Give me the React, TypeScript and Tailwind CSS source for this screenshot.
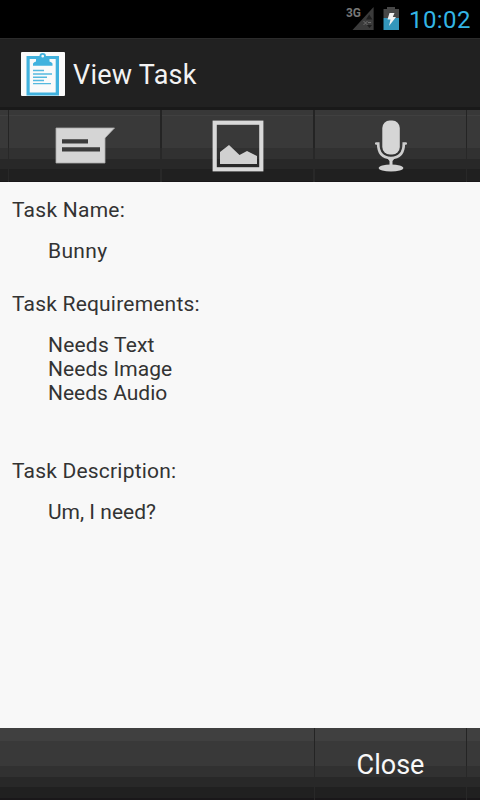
import React from "react";

function StatusBar() {
  return (
    <div className="flex h-[38px] items-start bg-black pl-[346px]">
      <svg width="60" height="38" viewBox="0 0 60 38" className="shrink-0">
        <path d="M27.600 7V30H6.500Z" fill="#3b3b3b" />
        <path d="M20 19.500l3.200-5 3.200 5zM21 25h5l-2.500 3z" fill="#1e1e1e" />
        <path d="M17.500 21l4 4M21.500 21l-4 4M22 22.500h3" stroke="#707070" strokeWidth="0.900" fill="none" />
        <text x="0" y="17" fontFamily="Roboto, sans-serif" fontWeight="700" fontSize="13.500" textLength="15" lengthAdjust="spacingAndGlyphs" fill="#777">3G</text>
        <path d="M41 7h8v2h4v9H37.500V9H41z" fill="#474747" />
        <path d="M37.500 18H53v12H37.500z" fill="#3396bb" />
        <path d="M43.500 13h5l-1.700 4h3.200l-7 9 1.500-6.500h-3z" fill="#f2f2f2" />
      </svg>
      <span className="ml-[3px] mt-[6px] whitespace-nowrap text-[24px] leading-[28px] tracking-[0.4px] text-[#33b5e5]">10:02</span>
    </div>
  );
}

function ClipboardIcon() {
  return (
    <svg width="44" height="44" viewBox="0 0 44 44" className="shrink-0">
      <rect width="44" height="44" rx="1" fill="#fafafa" />
      <path d="M5.500 4H38v39.500H5.500zM8.700 7V40.500h26V7z" fill="#41b2de" fillRule="evenodd" />
      <path d="M12 13.800v-2.300q1-1.500 3-2V7h13.500v2.500q2 .5 3 2v2.300z" fill="#41b2de" />
      <circle cx="21.700" cy="4.200" r="2.300" fill="#fafafa" stroke="#41b2de" strokeWidth="1.900" />
      <path d="M12 18.500h11M12 22h19M12 25.300h14M12 28.500h11M12 31.600h18" stroke="#55b9df" strokeWidth="1.400" />
    </svg>
  );
}

function TextIcon() {
  return (
    <svg width="60" height="38" viewBox="0 0 60 38" className="mt-[-1px] ml-[1px]">
      <path d="M1 1H59.500L50 11V36H1z" fill="#d5d5d5" stroke="#ababab" strokeWidth="0.8" />
      <path d="M7 12.200h26v4.300H7zM7 20.200h38v4.300H7z" fill="#3a3a3a" />
    </svg>
  );
}

function ImageIcon() {
  return (
    <svg width="52" height="52" viewBox="0 0 52 52">
      <rect x="2.700" y="2.700" width="46.600" height="46.600" fill="none" stroke="#d9d9d9" strokeWidth="4.200" />
      <path d="M8 32l9-7 10.500 10 7.500-4 10 5v8H8z" fill="#d0d0d0" />
    </svg>
  );
}

function MicIcon() {
  return (
    <svg width="34" height="52" viewBox="0 0 34 52">
      <rect x="8.300" y="0.500" width="17.500" height="34" rx="7.500" fill="#d6d6d6" />
      <path d="M2.300 23.500H4.200q0 14.500 12.800 14.500t12.800-14.500h1.900" fill="none" stroke="#cdcdcd" strokeWidth="2.700" strokeLinecap="round" />
      <path d="M13 38h8l-2.500 3v5h-3v-5z" fill="#d0d0d0" />
      <ellipse cx="17" cy="48" rx="12.300" ry="3.600" fill="#d0d0d0" />
    </svg>
  );
}

const topBar =
  "bg-[linear-gradient(#383838_0_5px,#404040_5px_6px,#393939_6px_38px,#313131_38px_49px,#282828_49px_59px,#202020_59px_71px,#191719_71px_72px)]";
const bottomBar =
  "bg-[linear-gradient(#404040_0_13px,#393939_13px_38px,#313131_38px_49px,#282828_49px_59px,#202020_59px_70px,#191719_70px_72px)]";
const seam = "shrink-0 bg-[linear-gradient(#242424_0_38px,#282828_38px_72px)]";

export default function App() {
  return (
    <div className="flex h-[800px] w-[480px] flex-col overflow-hidden bg-[#f8f8f8] font-['Roboto',sans-serif]">
      <StatusBar />
      <header className="flex h-[72px] items-start border-t border-b-[3px] border-t-[#2b2b2b] border-b-[#191919] bg-[#212121] pl-[21px] pt-[13px]">
        <ClipboardIcon />
        <h1 className="ml-[8px] mt-[7px] text-[27px] leading-[32px] tracking-[0.25px] text-[#f3f3f3]">View Task</h1>
      </header>
      <nav className={`flex h-[72px] shrink-0 ${topBar}`}>
        <div className={`ml-2 w-px ${seam}`} />
        <button className="flex w-[151px] items-center justify-center"><TextIcon /></button>
        <div className={`w-[2px] ${seam}`} />
        <button className="flex w-[151px] items-center justify-center"><ImageIcon /></button>
        <div className={`w-[2px] ${seam}`} />
        <button className="flex w-[151px] items-center justify-center"><MicIcon /></button>
        <div className={`w-px ${seam}`} />
      </nav>
      <main className="flex-1 px-3 pt-4 text-[21px] leading-[24px] tracking-[0.2px] text-[#333]">
        <h2 className="tracking-[0.25px]">Task Name:</h2>
        <p className="mt-[17px] pl-9 tracking-[0.35px]">Bunny</p>
        <h2 className="mt-[29px]">Task Requirements:</h2>
        <ul className="mt-[17px] pl-9">
          <li>Needs Text</li>
          <li className="tracking-[0.05px]">Needs Image</li>
          <li className="tracking-[0px]">Needs Audio</li>
        </ul>
        <h2 className="mt-[54px]">Task Description:</h2>
        <p className="mt-[17px] pl-9 tracking-[0px]">Um, I need?</p>
      </main>
      <footer className={`flex h-[72px] shrink-0 ${bottomBar}`}>
        <div className={`ml-[314px] w-px ${seam}`} />
        <button className="flex w-[151px] items-center justify-center pt-[2px] text-[27px] leading-[32px] text-[#f8f8f8]">Close</button>
        <div className={`w-px ${seam}`} />
      </footer>
    </div>
  );
}
